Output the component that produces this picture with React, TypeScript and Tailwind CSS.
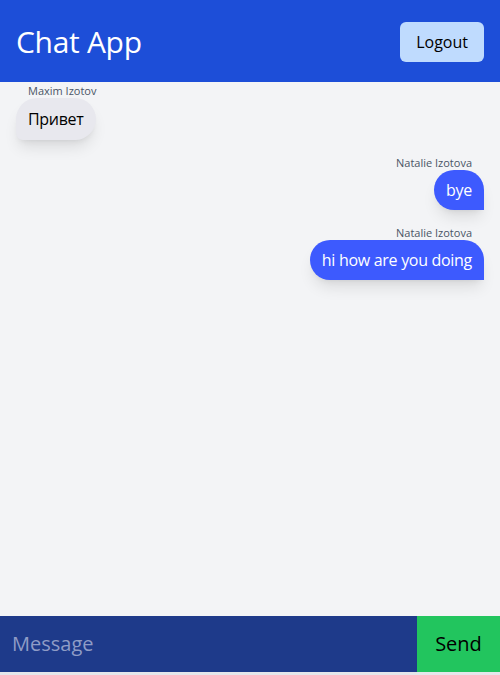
import { useState } from 'react';

type Message = {
  id: number;
  author: string;
  text: string;
  mine: boolean;
};

const messages: Array<Message> = [
  { id: 1, author: 'Maxim Izotov', text: 'Привет', mine: false },
  { id: 2, author: 'Natalie Izotova', text: 'bye', mine: true },
  { id: 3, author: 'Natalie Izotova', text: 'hi how are you doing', mine: true },
];

export default function App() {
  const [value, setValue] = useState('');

  return (
    <div
      className="flex flex-col h-[675px] bg-gray-100"
      style={{ fontFamily: '"Open Sans", "Noto Sans", sans-serif' }}
    >
      <header className="h-[82px] shrink-0 bg-[#1d4ed8] flex items-center justify-between px-4 pt-[2px]">
        <h1 className="text-[30px] text-white leading-none tracking-[-0.3px]">Chat App</h1>
        <button className="h-10 px-4 rounded-md bg-[#bfdbfe] text-base text-black">
          Logout
        </button>
      </header>

      <div className="flex-1 flex flex-col px-4 pt-[2px] gap-4">
        {messages.map((message) => (
          <div
            key={message.id}
            className={
              message.mine
                ? 'flex flex-col items-end'
                : 'flex flex-col items-start'
            }
          >
            <span className="text-[11px] text-gray-600 px-3 leading-[14px]">
              {message.author}
            </span>
            <div
              className={
                message.mine
                  ? 'mt-0 px-3 py-2 text-base tracking-[-0.3px] text-white bg-[#3d5afe] rounded-t-3xl rounded-bl-3xl shadow-lg'
                  : 'mt-0 px-3 py-[9px] text-base tracking-[-0.3px] text-black bg-[#e8e8ee] rounded-t-3xl rounded-br-3xl rounded-bl-lg shadow-lg'
              }
            >
              {message.text}
            </div>
          </div>
        ))}
      </div>

      <form className="flex h-14 shrink-0" onSubmit={(e) => e.preventDefault()}>
        <input
          value={value}
          onChange={(e) => setValue(e.target.value)}
          placeholder="Message"
          className="flex-1 min-w-0 bg-[#1e3a8a] px-3 text-xl text-white placeholder:text-[#8f9cc6] outline-none"
        />
        <button className="w-[83px] bg-[#22c55e] text-xl text-black">Send</button>
      </form>
      <div className="h-[3px] shrink-0 bg-gray-200" />
    </div>
  );
}
